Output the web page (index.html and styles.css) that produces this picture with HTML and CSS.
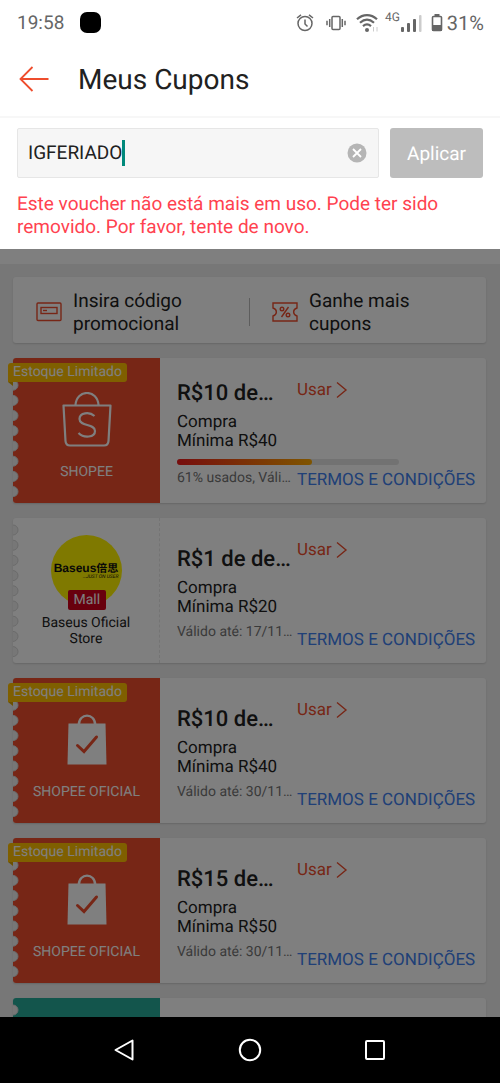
FILE: index.html
```html
<!DOCTYPE html>
<html lang="pt-BR">
<head>
<meta charset="utf-8">
<meta name="viewport" content="width=device-width, initial-scale=1">
<title>Meus Cupons</title>
<link rel="stylesheet" href="styles.css">
</head>
<body>
<svg class="defs" aria-hidden="true">
  <symbol id="notches" viewBox="0 0 7 145">
    <g class="notch"><circle cx="0" cy="12" r="5"/><circle cx="0" cy="27.2" r="5"/><circle cx="0" cy="42.4" r="5"/><circle cx="0" cy="57.6" r="5"/><circle cx="0" cy="72.8" r="5"/><circle cx="0" cy="88" r="5"/><circle cx="0" cy="103.2" r="5"/><circle cx="0" cy="118.4" r="5"/><circle cx="0" cy="133.6" r="5"/></g>
  </symbol>
  <symbol id="chevron" viewBox="0 0 12 18">
    <path d="M1 1.500 10 9 1 16.500" fill="none" stroke="currentColor" stroke-width="1.400"/>
  </symbol>
  <symbol id="bag-check" viewBox="0 0 50 56">
    <path d="M6.500 11.500H43.500L44.500 52.500H5.500z" fill="#fff"/>
    <path d="M16.800 13C16.800 .5 33.200 .5 33.200 13" fill="none" stroke="#fff" stroke-width="2.400"/>
    <path d="M15.500 33.500 22 39.500 34.500 25" fill="none" stroke="#ee4d2d" stroke-width="3" stroke-linecap="round"/>
  </symbol>
</svg>

<div class="phone">
  <div class="status">
    <span class="clock">19:58</span>
    <span class="blob"></span>
    <div class="indicators">
      <svg class="alarm" width="18" height="20" viewBox="0 0 18 20" fill="none" stroke="currentColor" stroke-width="1.500"><circle cx="9" cy="10.500" r="7"/><path d="M9 6.500v4.500l2.500 2.500M1 5 5 1.800M17 5 13 1.800"/></svg>
      <svg class="vibrate" width="20" height="18" viewBox="0 0 20 18" fill="none" stroke="currentColor" stroke-width="1.500"><rect x="6" y="2.500" width="8" height="13" rx="1"/><path d="M3.700 5v8M16.300 5v8M1 6.800v4.500M19 6.800v4.500"/></svg>
      <svg class="wifi" width="23" height="20" viewBox="0 0 23 20" fill="none" stroke="currentColor" stroke-width="2.200"><path d="M1 6.200C7 .7 15 .7 21 6.200M4 9.800c4.500-4 9.500-4 14 0M7 13.200c2.500-2.200 5.500-2.200 8 0"/><circle cx="11" cy="17" r="2" fill="currentColor" stroke="none"/><path d="M17.500 14v4.500M21 14v4.500" stroke="#ccc" stroke-width="1"/></svg>
      <span class="network">4G</span>
      <svg class="signal" width="21" height="18" viewBox="0 0 21 18" fill="currentColor"><rect x="0" y="13" width="3" height="5" rx="1"/><rect x="6" y="9" width="3" height="9" rx="1"/><rect x="12" y="5" width="3" height="13" rx="1"/><rect x="18" y="1" width="2.500" height="17" rx="1" fill="#ccc"/></svg>
      <svg class="battery" width="12" height="19" viewBox="0 0 12 19"><path d="M3.500 1h5v2.500h-5z" fill="currentColor"/><rect x="1.500" y="3.500" width="9" height="14" rx="1" fill="none" stroke="currentColor" stroke-width="1.600"/><path d="M1 12h10v6H1z" fill="currentColor"/></svg>
      <span class="percent">31%</span>
    </div>
  </div>

  <header class="topbar">
    <button class="back" type="button" aria-label="Voltar"><svg width="30" height="26" viewBox="0 0 30 26" fill="none" stroke="currentColor" stroke-width="1.800"><path d="M29.500 13H2M13.500 1 1.500 13l12 12"/></svg></button>
    <h1>Meus Cupons</h1>
  </header>

  <form class="redeem">
    <div class="redeem-row">
      <div class="field">
        <input class="code" type="text" value="IGFERIADO" aria-label="Código do voucher">
        <span class="caret"></span>
        <button class="clear" type="button" aria-label="Limpar"><svg width="20" height="20" viewBox="0 0 20 20"><circle cx="10" cy="10" r="9.500" fill="#b5b5b5"/><path d="m6 6 8 8M14 6l-8 8" stroke="#fff" stroke-width="1.800"/></svg></button>
      </div>
      <button class="apply" type="button">Aplicar</button>
    </div>
    <p class="error">Este voucher não está mais em uso. Pode ter sido removido. Por favor, tente de novo.</p>
  </form>

  <main class="content">
    <div class="strip"></div>
    <div class="list">
      <nav class="promo">
        <a class="promo-link" href="#codigo">
          <svg width="26" height="20" viewBox="0 0 26 20" fill="none" stroke="currentColor" stroke-width="1.400"><rect x="1" y="1" width="24" height="17.500" rx="1"/><rect x="5" y="5.500" width="16" height="6"/><path d="M7 8.500h4"/></svg>
          <span>Insira código promocional</span>
        </a>
        <span class="divider"></span>
        <a class="promo-link promo-more" href="#ganhe">
          <svg width="26" height="20" viewBox="0 0 26 20" fill="none" stroke="currentColor" stroke-width="1.400"><path d="M1 1h24v5c-4.500 1.500-4.500 6.500 0 8v5H1v-5c4.500-1.500 4.500-6.500 0-8z"/><path d="m16.500 5-7 10"/><circle cx="10" cy="7" r="1.800"/><circle cx="16" cy="13" r="1.800"/></svg>
          <span>Ganhe mais cupons</span>
        </a>
      </nav>

      <article class="coupon">
        <div class="brand red">
          <svg class="edge"><use href="#notches"/></svg>
          <svg width="50" height="56" viewBox="0 0 50 56" fill="none" stroke="#fff" stroke-width="2.200"><path d="M1.500 13.500h47L46.500 49c-.2 3-1.500 4.500-4.500 4.500H8C5 53.500 3.700 52 3.500 49z" stroke-linejoin="round"/><path d="M13.500 13C14.500-3 35.500-3 36.500 13"/><path d="M32.500 24c-5-4.500-15-3.500-15 3 0 7.500 15.500 4.500 15.500 12 0 6.500-11 7.500-16.500 2"/></svg>
          <p class="brand-name">SHOPEE</p>
        </div>
        <span class="tag">Estoque Limitado</span>
        <div class="info">
          <h2>R$10 de…</h2>
          <p class="minimum">Compra Mínima R$40</p>
          <div class="meter"><div class="meter-fill" style="width: 61%"></div></div>
          <p class="validity">61% usados, Váli…</p>
        </div>
        <div class="actions">
          <a class="use" href="#usar">Usar<svg width="12" height="18"><use href="#chevron"/></svg></a>
          <a class="terms" href="#termos">TERMOS E CONDIÇÕES</a>
        </div>
      </article>

      <article class="coupon">
        <div class="brand store">
          <svg class="edge"><use href="#notches"/></svg>
          <div class="avatar">
            <div class="logo"><strong>Baseus</strong><b class="han">倍思</b></div>
            <em class="slogan">…JUST ON USER</em>
            <span class="mall">Mall</span>
          </div>
          <p class="brand-name">Baseus Oficial Store</p>
        </div>
        <div class="info">
          <h2>R$1 de de…</h2>
          <p class="minimum">Compra Mínima R$20</p>
          <p class="validity">Válido até: 17/11…</p>
        </div>
        <div class="actions">
          <a class="use" href="#usar">Usar<svg width="12" height="18"><use href="#chevron"/></svg></a>
          <a class="terms" href="#termos">TERMOS E CONDIÇÕES</a>
        </div>
      </article>

      <article class="coupon">
        <div class="brand red">
          <svg class="edge"><use href="#notches"/></svg>
          <svg width="50" height="56"><use href="#bag-check"/></svg>
          <p class="brand-name">SHOPEE OFICIAL</p>
        </div>
        <span class="tag">Estoque Limitado</span>
        <div class="info">
          <h2>R$10 de…</h2>
          <p class="minimum">Compra Mínima R$40</p>
          <p class="validity">Válido até: 30/11…</p>
        </div>
        <div class="actions">
          <a class="use" href="#usar">Usar<svg width="12" height="18"><use href="#chevron"/></svg></a>
          <a class="terms" href="#termos">TERMOS E CONDIÇÕES</a>
        </div>
      </article>

      <article class="coupon">
        <div class="brand red">
          <svg class="edge"><use href="#notches"/></svg>
          <svg width="50" height="56"><use href="#bag-check"/></svg>
          <p class="brand-name">SHOPEE OFICIAL</p>
        </div>
        <span class="tag">Estoque Limitado</span>
        <div class="info">
          <h2>R$15 de…</h2>
          <p class="minimum">Compra Mínima R$50</p>
          <p class="validity">Válido até: 30/11…</p>
        </div>
        <div class="actions">
          <a class="use" href="#usar">Usar<svg width="12" height="18"><use href="#chevron"/></svg></a>
          <a class="terms" href="#termos">TERMOS E CONDIÇÕES</a>
        </div>
      </article>

      <article class="coupon">
        <div class="brand green"><svg class="edge"><use href="#notches"/></svg></div>
      </article>
    </div>
    <div class="scrim"></div>
  </main>

  <nav class="system">
    <button type="button" aria-label="Voltar"><svg width="24" height="24" viewBox="0 0 24 24"><path d="M19.500 2.500v19L2.500 12z"/></svg></button>
    <button type="button" aria-label="Início"><svg width="24" height="24" viewBox="0 0 24 24"><circle cx="12" cy="12" r="10.200"/></svg></button>
    <button type="button" aria-label="Recentes"><svg width="24" height="24" viewBox="0 0 24 24"><rect x="3" y="3" width="18" height="18" rx="1"/></svg></button>
  </nav>
</div>
</body>
</html>
```

FILE: styles.css
```css
* { box-sizing: border-box; }
body, h1, h2, p { margin: 0; }
body { font-family: Roboto, "Noto Sans CJK SC", sans-serif; color: #212121; background: #000; text-rendering: geometricPrecision; }
button { border: 0; padding: 0; background: none; font: inherit; color: inherit; text-rendering: inherit; }
a { color: inherit; text-decoration: none; }
svg { display: block; flex: none; }
.defs { position: absolute; width: 0; height: 0; }

.phone { display: flex; flex-direction: column; height: 100vh; background: #fff; }

.status { display: flex; align-items: center; height: 45px; padding: 0 16px 0 17px; color: #666; font-size: 19px; }
.blob { width: 21px; height: 21px; margin-left: 16px; border-radius: 7px; background: #000; }
.indicators { display: flex; align-items: center; margin-left: auto; }
.vibrate { margin-left: 12px; }
.wifi { margin-left: 10px; }
.network { align-self: flex-start; margin-left: 6px; font-size: 12px; line-height: 12px; }
.signal { margin-left: 1px; }
.battery { margin-left: 9px; }
.percent { margin-left: 4px; font-size: 20px; }

.topbar { display: flex; align-items: center; gap: 29px; height: 73px; padding: 0 19px 4px; border-bottom: 2px solid #f7f7f7; }
.back { color: #ee4d2d; }
h1 { padding-top: 2px; font-size: 28px; font-weight: 400; line-height: 34px; }

.redeem { padding: 10px 17px 11px; }
.redeem-row { display: flex; gap: 11px; }
.field { display: flex; flex: 1; align-items: center; height: 50px; padding: 0 11px 0 10px; border: 1px solid #e6e6e6; border-radius: 2px; background: #f6f6f6; }
.code { field-sizing: content; border: 0; padding: 0; outline: 0; background: none; color: #212121; font: 19px/24px Roboto, sans-serif; text-rendering: inherit; }
.caret { width: 3px; height: 26px; background: #00897b; }
.clear { margin-left: auto; }
.apply { width: 93px; border-radius: 3px; background: #bdbdbd; color: #fff; font-size: 19px; }
.error { margin-top: 14px; color: #ff424f; font-size: 19px; line-height: 23px; }

.content { position: relative; flex: 1; min-height: 0; overflow: hidden; background: #efefef; }
.strip { height: 15px; background: #fff; }
.scrim { position: absolute; inset: 0; background: rgba(0, 0, 0, .5); }
.list { display: flex; flex-direction: column; gap: 15px; padding: 13px 14px 0 13px; }

.promo { display: grid; grid-template-columns: 1fr 1px 1fr; align-items: center; min-height: 66px; padding-top: 3px; border-radius: 3px; background: #fff; box-shadow: 0 1px 2px #ccc; }
.promo-link { display: flex; align-items: center; gap: 11px; padding: 0 23px; font-size: 19px; line-height: 23px; }
.promo-link svg { color: #ee4d2d; }
.promo-more { padding: 0 56px 0 22px; }
.divider { height: 28px; background: #bbb; }

.coupon { position: relative; display: flex; flex: none; height: 145px; background: #fff; box-shadow: 0 1px 2px #ccc; border-radius: 3px; }
.brand { position: relative; display: flex; flex: none; flex-direction: column; align-items: center; justify-content: center; gap: 15px; width: 147px; padding-top: 12px; border-radius: 3px 0 0 3px; font-size: 14px; line-height: 18px; }
.edge { position: absolute; top: 0; left: 0; width: 7px; height: 145px; }
.notch { fill: #efefef; stroke: #d6d6d6; stroke-width: 1; }
.red { background: #ee4d2d; color: #fff; }
.red .notch, .green .notch { stroke: none; }
.green { background: #26aa99; }
.tag { position: absolute; top: 5px; left: -5px; padding: 0 5px; border-radius: 3px 3px 3px 0; background: #ffbf00; color: #fff; font-size: 14px; line-height: 19px; white-space: nowrap; }
.tag::after { content: ""; position: absolute; top: 100%; left: 0; border-top: 4px solid #d9a200; border-left: 5px solid transparent; }

.store { gap: 9px; padding: 1px 24px 0; border-right: 1px dashed #e8e8e8; line-height: 16px; text-align: center; }
.avatar { position: relative; display: flex; flex-direction: column; align-items: center; justify-content: center; width: 71px; height: 71px; border-radius: 50%; background: #fff200; color: #111; }
.logo { display: flex; align-items: center; font: 700 12px/13px "Liberation Sans", Arial, sans-serif; white-space: nowrap; }
.han { font: 700 11px/13px "Noto Sans CJK SC", sans-serif; }
.slogan { align-self: flex-end; padding-right: 3px; font-size: 5px; line-height: 5px; white-space: nowrap; }
.mall { position: absolute; bottom: -4px; left: 17px; padding: 0 6px; border-radius: 2px; background: #d0011b; color: #fff; font-size: 14px; line-height: 20px; }

.info { display: flex; flex: none; flex-direction: column; justify-content: center; width: 120px; padding: 6px 0 0 17px; white-space: nowrap; }
h2 { margin-bottom: 5px; font-size: 22px; font-weight: 500; line-height: 28px; }
.minimum { max-width: 113px; font-size: 17px; line-height: 19px; white-space: normal; }
.meter { width: 222px; height: 6px; margin-top: 8px; border-radius: 3px; background: #e5e5e5; }
.meter-fill { height: 6px; border-radius: 3px; background: linear-gradient(90deg, #ee1b1b, #ffaa00); }
.validity { margin-top: 6px; color: #757575; font-size: 14px; line-height: 18px; }
.meter + .validity { margin-top: 4px; }
.actions { display: flex; flex: 1; flex-direction: column; align-items: flex-start; justify-content: space-between; padding: 22px 0 13px 17px; font-size: 17px; line-height: 20px; white-space: nowrap; }
.use { display: flex; align-items: center; gap: 4px; color: #ee4d2d; }
.terms { color: #4080ee; }

.system { display: flex; flex: none; align-items: center; justify-content: space-between; height: 66px; padding: 0 113px; background: #000; }
.system svg { fill: none; stroke: #fff; stroke-width: 2; stroke-linejoin: round; }
```
